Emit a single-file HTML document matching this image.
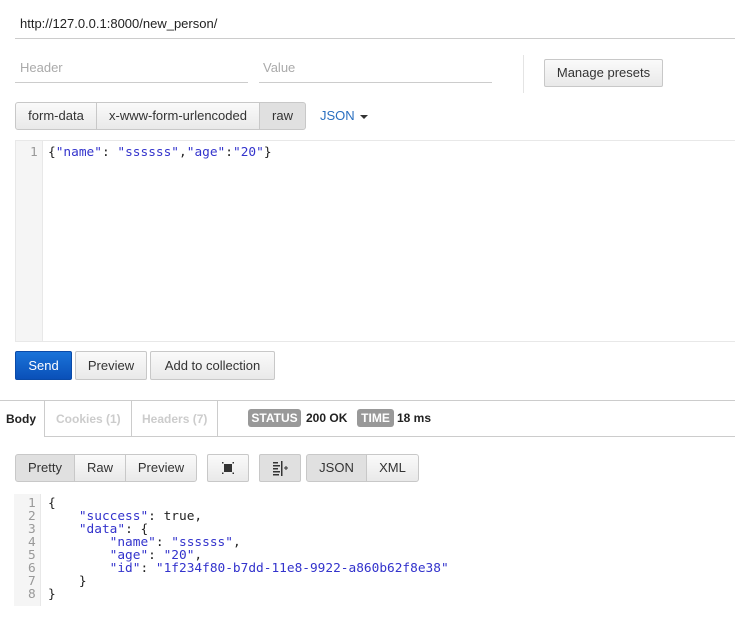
<!DOCTYPE html>
<html><head><style>
*{margin:0;padding:0;box-sizing:border-box}
body{width:735px;height:627px;background:#fff;font-family:"Liberation Sans",sans-serif;position:relative;overflow:hidden;color:#333}
.a{position:absolute}
.btn{position:absolute;border:1px solid #c8c8c8;background:linear-gradient(#fafafa,#e9e9e9);font-size:13px;color:#333;text-align:center;border-radius:2px}
.act{background:#e0e0e0}
.mono{font-family:"DejaVu Sans Mono",monospace;font-size:12.8px}
.k{color:#3333cc}
</style></head><body>
<div class="a" style="left:20px;top:16px;font-size:13px;color:#222">http://127.0.0.1:8000/new_person/</div>
<div class="a" style="left:15px;top:38px;width:720px;height:1px;background:#ccc"></div>
<div class="a" style="left:20px;top:60px;font-size:13px;color:#aaa">Header</div>
<div class="a" style="left:15px;top:82px;width:233px;height:1px;background:#ccc"></div>
<div class="a" style="left:263px;top:60px;font-size:13px;color:#aaa">Value</div>
<div class="a" style="left:259px;top:82px;width:233px;height:1px;background:#ccc"></div>
<div class="a" style="left:523px;top:55px;width:1px;height:38px;background:#e4e4e4"></div>
<div class="btn" style="left:544px;top:59px;width:119px;height:28px;line-height:26px">Manage presets</div>

<div class="btn" style="left:15px;top:102px;width:82px;height:28px;line-height:26px;border-radius:3px 0 0 3px">form-data</div>
<div class="btn" style="left:96px;top:102px;width:164px;height:28px;line-height:26px;border-radius:0">x-www-form-urlencoded</div>
<div class="btn act" style="left:259px;top:102px;width:47px;height:28px;line-height:26px;border-radius:0 3px 3px 0">raw</div>
<div class="a" style="left:320px;top:108px;font-size:13px;color:#2a6fc0">JSON <span style="display:inline-block;border-left:4px solid transparent;border-right:4px solid transparent;border-top:4px solid #333;vertical-align:middle;margin-left:2px"></span></div>

<div class="a" style="left:15px;top:140px;width:720px;height:202px;border:1px solid #e8e8e8;border-right:none"></div>
<div class="a" style="left:16px;top:141px;width:27px;height:200px;background:#f5f5f5;border-right:1px solid #e8e8e8"></div>
<div class="a mono" style="left:30px;top:145px;color:#999">1</div>
<div class="a mono" style="left:48px;top:145px;white-space:pre;color:#222">{<span class="k">"name"</span>: <span class="k">"ssssss"</span>,<span class="k">"age"</span>:<span class="k">"20"</span>}</div>

<div class="btn" style="left:15px;top:351px;width:57px;height:29px;line-height:27px;background:linear-gradient(#1a73d9,#0a50b8);border-color:#0a4aa8;color:#fff">Send</div>
<div class="btn" style="left:75px;top:351px;width:72px;height:29px;line-height:27px">Preview</div>
<div class="btn" style="left:150px;top:351px;width:125px;height:29px;line-height:27px">Add to collection</div>

<div class="a" style="left:0;top:400px;width:735px;height:1px;background:#ccc"></div>
<div class="a" style="left:0;top:436px;width:735px;height:1px;background:#ccc"></div>
<div class="a" style="left:0;top:401px;width:45px;height:36px;background:#fff;border-right:1px solid #ccc"></div>
<div class="a" style="left:131px;top:401px;width:1px;height:35px;background:#ccc"></div>
<div class="a" style="left:217px;top:401px;width:1px;height:35px;background:#ccc"></div>
<div class="a" style="left:6px;top:412px;font-size:12px;font-weight:bold;color:#222">Body</div>
<div class="a" style="left:56px;top:412px;font-size:12px;font-weight:bold;color:#ccc">Cookies (1)</div>
<div class="a" style="left:142px;top:412px;font-size:12px;font-weight:bold;color:#ccc">Headers (7)</div>
<div class="a" style="left:248px;top:409px;width:53px;height:18px;background:#999;border-radius:3px;color:#fff;font-size:12px;font-weight:bold;text-align:center;line-height:18px">STATUS</div>
<div class="a" style="left:306px;top:411px;font-size:12px;font-weight:bold;color:#222">200 OK</div>
<div class="a" style="left:357px;top:409px;width:37px;height:18px;background:#999;border-radius:3px;color:#fff;font-size:12px;font-weight:bold;text-align:center;line-height:18px">TIME</div>
<div class="a" style="left:397px;top:411px;font-size:12px;font-weight:bold;color:#222">18 ms</div>

<div class="btn act" style="left:15px;top:454px;width:60px;height:28px;line-height:26px;border-radius:3px 0 0 3px">Pretty</div>
<div class="btn" style="left:74px;top:454px;width:52px;height:28px;line-height:26px;border-radius:0">Raw</div>
<div class="btn" style="left:125px;top:454px;width:72px;height:28px;line-height:26px;border-radius:0 3px 3px 0">Preview</div>
<div class="btn" style="left:207px;top:454px;width:42px;height:28px"><svg width="40" height="26" viewBox="0 0 40 26"><rect x="16" y="9" width="8" height="8" fill="#333"/><g fill="#333"><rect x="14" y="7" width="1.5" height="1.5"/><rect x="24.5" y="7" width="1.5" height="1.5"/><rect x="14" y="17.5" width="1.5" height="1.5"/><rect x="24.5" y="17.5" width="1.5" height="1.5"/></g></svg></div>
<div class="btn act" style="left:259px;top:454px;width:42px;height:28px"><svg width="40" height="26" viewBox="0 0 40 26"><g fill="#333"><rect x="13" y="7" width="5" height="1.5"/><rect x="13" y="10" width="7" height="1.5"/><rect x="13" y="13" width="5" height="1.5"/><rect x="13" y="16" width="7" height="1.5"/><rect x="13" y="19" width="6" height="1.5"/><rect x="21" y="6" width="1.5" height="15"/><rect x="24" y="12.5" width="4" height="1"/><rect x="25.5" y="11" width="1" height="4"/></g></svg></div>
<div class="btn act" style="left:306px;top:454px;width:61px;height:28px;line-height:26px;border-radius:3px 0 0 3px">JSON</div>
<div class="btn" style="left:366px;top:454px;width:53px;height:28px;line-height:26px;border-radius:0 3px 3px 0">XML</div>

<div class="a" style="left:14px;top:494px;width:27px;height:112px;background:#f5f5f5;border-right:1px solid #e8e8e8"></div>
<div class="a mono" style="left:28px;top:497px;line-height:13px;color:#999;white-space:pre">1
2
3
4
5
6
7
8</div>
<div class="a mono" style="left:48px;top:497px;line-height:13px;color:#222;white-space:pre">{
    <span class="k">"success"</span>: true,
    <span class="k">"data"</span>: {
        <span class="k">"name"</span>: <span class="k">"ssssss"</span>,
        <span class="k">"age"</span>: <span class="k">"20"</span>,
        <span class="k">"id"</span>: <span class="k">"1f234f80-b7dd-11e8-9922-a860b62f8e38"</span>
    }
}</div>
</body></html>
